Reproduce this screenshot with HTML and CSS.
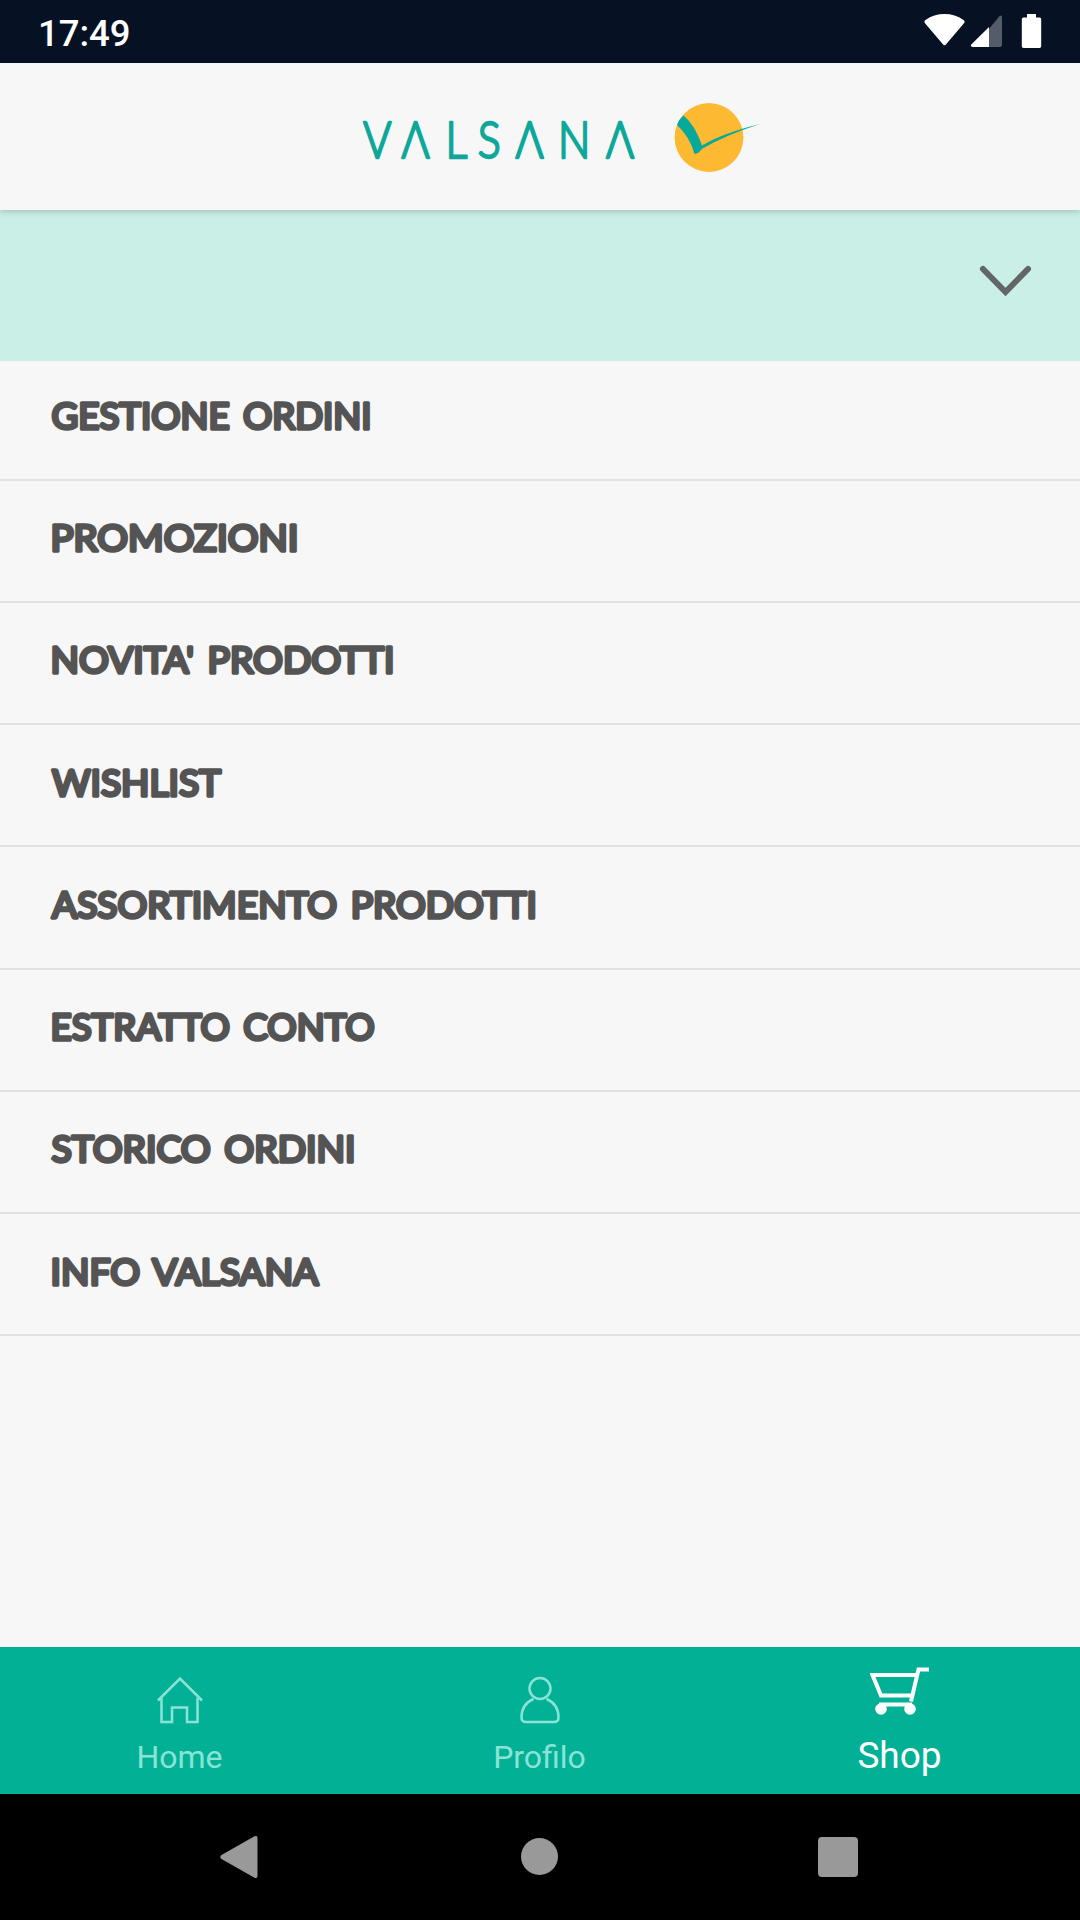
FILE: index.html
```html
<!doctype html>
<html lang="it">
  <head>
    <meta charset="UTF-8" />
    <meta name="viewport" content="width=device-width, initial-scale=1.0" />
    <title>Valsana - Shop</title>
    <link rel="stylesheet" href="styles.css">
  </head>
  <body>
    <div class="status">
      <span class="time">17:49</span>
      <svg class="status-icons" width="120" height="36" viewBox="0 0 120 36">
        <path d="M3 10.200q-1.500-2 .5-3.300Q12 1 22.500 1t19 5.900q2 1.300 .5 3.300L23.900 31.600q-1.400 1.500-2.800 0z" fill="#fff" />
        <path d="M80 4.700V32a2 2 0 0 1-2 2H67V15.700L77.500 3.200q2.500-2 2.500 1.500z" fill="#545c69" />
        <path d="M67 14v20H50.500q-2.700-.5-1-2.700z" fill="#fff" />
        <path d="M105 1h9v3.500h3.500q1.700 0 1.700 1.700v27q0 1.700-1.700 1.700h-16q-1.700 0-1.700-1.700v-27q0-1.700 1.700-1.700h3.500z" fill="#fff" />
      </svg>
    </div>

    <header class="header">
      <svg class="logo" width="420" height="80" viewBox="0 0 420 80">
        <text class="logo-text" transform="scale(.85 1)" x="27.500 72.500 124 162 206.500 256.500 313" y="59">VΛLSΛNΛ</text>
        <circle cx="369" cy="38.500" r="34.400" fill="#fdb932" />
        <path d="M343.500 16.500Q355 26 362 46.500Q383 34 420 25Q386 36 362.500 49.500L358 54L354.500 55Q350 38 337 26Q339 20 343.500 16.500z" fill="#07a99a" />
      </svg>
    </header>

    <div class="select">
      <svg width="54" height="34" viewBox="0 0 54 34">
        <path d="M4 5l22.500 23L49 5" fill="none" stroke="#626766" stroke-width="6" stroke-linecap="round" />
      </svg>
    </div>

    <ul class="menu">
      <li><a href="#"><svg width="600" height="50"><text x="1.500" y="38" textLength="320" lengthAdjust="spacingAndGlyphs">GESTIONE ORDINI</text></svg></a></li>
      <li><a href="#"><svg width="600" height="50"><text x="0.500" y="38" textLength="248" lengthAdjust="spacingAndGlyphs">PROMOZIONI</text></svg></a></li>
      <li><a href="#"><svg width="600" height="50"><text x="0.500" y="38" textLength="344" lengthAdjust="spacingAndGlyphs">NOVITA' PRODOTTI</text></svg></a></li>
      <li><a href="#"><svg width="600" height="50"><text x="2" y="38.500" textLength="169" lengthAdjust="spacingAndGlyphs">WISHLIST</text></svg></a></li>
      <li><a href="#"><svg width="600" height="50"><text x="2" y="38.500" textLength="485" lengthAdjust="spacingAndGlyphs">ASSORTIMENTO PRODOTTI</text></svg></a></li>
      <li><a href="#"><svg width="600" height="50"><text x="0.500" y="38" textLength="324" lengthAdjust="spacingAndGlyphs">ESTRATTO CONTO</text></svg></a></li>
      <li><a href="#"><svg width="600" height="50"><text x="1.500" y="38" textLength="304" lengthAdjust="spacingAndGlyphs">STORICO ORDINI</text></svg></a></li>
      <li><a href="#"><svg width="600" height="50"><text x="0.500" y="38.500" textLength="268" lengthAdjust="spacingAndGlyphs">INFO VALSANA</text></svg></a></li>
    </ul>

    <nav class="tabs">
      <a href="#" class="tab">
        <svg width="48" height="48" viewBox="0 0 48 48">
          <path d="M2 24.500L24 2.500l22 22M5.500 22v24h10.500V31.500h15V46h10.500V22" />
        </svg>
        <span>Home</span>
      </a>
      <a href="#" class="tab">
        <svg width="48" height="48" viewBox="0 0 48 48">
          <circle cx="24" cy="12.500" r="10.500" />
          <path d="M17.500 23Q5.500 28 5.500 41.500q0 4.500 4.500 4.500h28q4.500 0 4.500-4.500Q42.500 28 30.500 23" />
        </svg>
        <span>Profilo</span>
      </a>
      <a href="#" class="tab active">
        <svg width="60" height="50" viewBox="0 0 60 50">
          <path d="M59 3.500H48.500L41 35.500M47 9H2.500L11 29.500h31M9 38.500h33" />
          <circle class="wheel" cx="11" cy="43" r="5.800" />
          <circle class="wheel" cx="40" cy="43" r="5.800" />
        </svg>
        <span>Shop</span>
      </a>
    </nav>

    <div class="android">
      <svg width="38" height="44" viewBox="0 0 38 44"><path d="M34.500 1.300Q37.500 0 37.500 3v38q0 3-3 1.700L1.500 24q-2.500-2 0-4z" /></svg>
      <svg width="40" height="38" viewBox="0 0 40 38"><circle cx="21.500" cy="18.500" r="18.500" /></svg>
      <svg width="40" height="40" viewBox="0 0 40 40"><rect width="40" height="40" rx="4" /></svg>
    </div>
  </body>
</html>
```

FILE: styles.css
```css
* {
  padding: 0;
  margin: 0;
  box-sizing: border-box;
}
body {
  display: flex;
  flex-direction: column;
  height: 1920px;
  background-color: #f7f7f7;
  font-family: Roboto, sans-serif;
  overflow: hidden;
}
a {
  text-decoration: none;
}
svg {
  display: block;
}
.status {
  display: flex;
  justify-content: space-between;
  height: 63px;
  padding: 13px 38px 0 38px;
  background-color: #061124;
  color: #fff;
}
.time {
  font-size: 36.500px;
  font-weight: 500;
  line-height: 41px;
}
.header {
  position: relative;
  height: 147px;
  padding: 36px 0 0 340px;
  background-color: #f7f7f7;
  box-shadow: 0 1px 7px rgba(0, 0, 0, 0.22);
}
.logo-text {
  font-family: Lato, sans-serif;
  font-size: 50.500px;
  font-weight: 300;
  fill: #10a79b;
  stroke: #10a79b;
  stroke-width: 2.500;
  stroke-linejoin: round;
}
.select {
  display: flex;
  justify-content: flex-end;
  height: 151px;
  padding: 54px 47px 0 0;
  background-color: #c9efe7;
}
.menu {
  flex: 1;
  list-style: none;
}
.menu li {
  height: 122.140px;
  padding: 32px 50px 0;
  border-bottom: 2px solid #e1e1e1;
}
.menu li:first-child {
  height: 120px;
  padding-top: 30px;
}
.menu a {
  display: block;
}
/* rounded corners on the lettering */
.menu text {
  font-family: Lato, sans-serif;
  font-size: 37px;
  font-weight: 400;
  word-spacing: 4px;
  fill: #545454;
  stroke: #545454;
  stroke-width: 3.500;
  stroke-linejoin: round;
}
.tabs {
  display: flex;
  height: 147px;
  background-color: #02b096;
}
.tab {
  flex: 1;
  display: flex;
  flex-direction: column;
  align-items: center;
  padding: 29px 1px 0 0;
  color: #8ae4d6;
  font-size: 32px;
}
.tab svg {
  fill: none;
  stroke: #8ae4d6;
  stroke-width: 2.500;
}
.tab span {
  margin-top: 14px;
  line-height: 38px;
}
.active {
  padding-top: 19px;
  color: #fff;
  font-size: 37px;
}
.active svg {
  stroke: #fff;
  stroke-width: 4;
}
.active .wheel {
  fill: #fff;
  stroke: none;
}
.active span {
  margin-top: 18px;
  line-height: 44px;
}
.android {
  display: flex;
  justify-content: space-between;
  align-items: center;
  height: 126px;
  padding: 0 222px 0 220px;
  background-color: #000;
  fill: #999;
}
```
